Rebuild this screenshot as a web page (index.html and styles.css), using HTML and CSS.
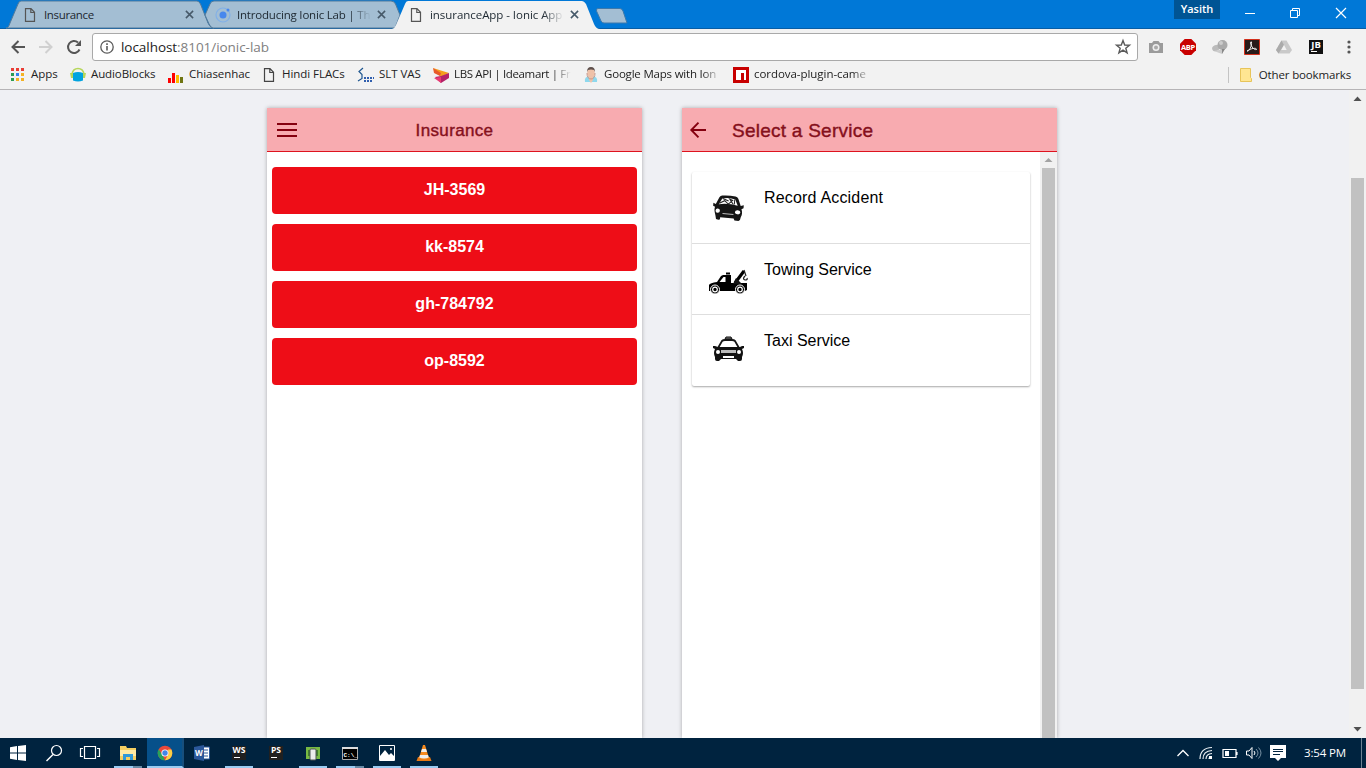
FILE: index.html
```html
<!DOCTYPE html>
<html lang="en">
<head>
<meta charset="utf-8">
<title>insuranceApp - Ionic App</title>
<link rel="stylesheet" href="styles.css">
</head>
<body>
<svg class="defs" aria-hidden="true">
  <symbol id="doc" viewBox="0 0 12 14"><path d="M1.500 .7h5.500l3.500 3.600v9H1.500zM6.800 .7v3.800h3.700" fill="none" stroke="currentColor" stroke-width="1.200"/></symbol>
  <symbol id="close" viewBox="0 0 10 10"><path d="M1 1l8 8M9 1L1 9" stroke="currentColor" stroke-width="1.700"/></symbol>
</svg>
<div class="screen">
  <header class="tabstrip">
    <div class="tab tab-a">
      <svg class="tab-shape" viewBox="0 0 208 28"><path d="M0 28C2 28 3 26 4 23L12 4Q13 1 15 1H191Q193 1 194.500 4L202 23Q204 28 208 28z" fill="#a3bed3" stroke="#527a9b"/></svg>
      <svg class="tab-doc"><use href="#doc"/></svg><span class="tab-title">Insurance</span><svg class="tab-close"><use href="#close"/></svg>
    </div>
    <div class="tab tab-b">
      <svg class="tab-shape" viewBox="0 0 198 28"><path d="M0 15L5 4Q6 1 9 1H186Q189 1 190.500 4L195 15L190 28H8Q6 28 4 24z" fill="#a3bed3" stroke="#527a9b"/></svg>
      <svg class="ionic" viewBox="0 0 16 16"><circle cx="8" cy="8" r="7" fill="none" stroke="#82b0e7" stroke-width="1.200"/><circle cx="8" cy="8" r="3.500" fill="#4787ed"/><circle cx="13" cy="3" r="1.500" fill="#4787ed"/></svg><span class="tab-title fade">Introducing Ionic Lab | Th</span><svg class="tab-close"><use href="#close"/></svg>
    </div>
    <div class="tab tab-c">
      <svg class="tab-shape" viewBox="0 0 208 29"><path d="M0 29Q3 28 4 25L13 4Q14 1 16 1H190Q192 1 194 4L202 24Q204 29 208 29z" fill="#f2f2f2"/></svg>
      <svg class="tab-doc"><use href="#doc"/></svg><span class="tab-title fade">insuranceApp - Ionic App</span><svg class="tab-close"><use href="#close"/></svg>
    </div>
    <svg class="newtab" viewBox="0 0 34 16"><path d="M3 .5H25Q27 .5 28 3L32 15H9Q7 15 6 13L1.500 3Q1 .5 3 .5z" fill="#a3bed3" stroke="#3c79ac"/></svg>
    <span class="profile">Yasith</span>
    <svg class="winctl" viewBox="0 0 104 12" fill="none" stroke="#fff"><path d="M1 6.500h10M46.500 3.500h7v7h-7zM48.500 3V1.500h7v7H54"/><path d="M92 1l10 10M102 1L92 11" stroke-width="1.200"/></svg>
  </header>

  <div class="toolbar">
    <svg class="nav" viewBox="0 0 74 16" fill="none" stroke-width="2"><path d="M15 8H2.500M8.500 2l-6 6 6 6" stroke="#555"/><path d="M29 8h12M35.500 2l6 6-6 6" stroke="#d0d0d0"/><path d="M69.500 10.500A6 6 0 1 1 68 3.500" stroke="#555"/><path d="M71 1v6h-6z" fill="#555"/></svg>
    <div class="omnibox">
      <svg class="info" viewBox="0 0 14 14"><circle cx="7" cy="7" r="6.200" fill="none" stroke="#5a5a5a" stroke-width="1.300"/><path d="M7 6v4.500M7 3.300v1.600" stroke="#5a5a5a" stroke-width="1.600"/></svg>
      <span class="url">localhost<span class="path">:8101/ionic-lab</span></span>
      <svg class="star" viewBox="0 0 16 16"><path d="M8 1.500l1.700 4.500 4.800.2-3.700 3 1.300 4.700L8 11.200l-4.100 2.700 1.300-4.700-3.700-3 4.800-.2z" fill="none" stroke="#5a5a5a" stroke-width="1.400"/></svg>
    </div>
    <div class="exts">
      <svg viewBox="0 0 16 16"><path d="M1 4h3l1.500-2h5L12 4h3v10H1z" fill="#9b9b9b"/><circle cx="8" cy="8.500" r="3.500" fill="#eee"/><circle cx="8" cy="8.500" r="2" fill="#aaa"/></svg>
      <svg viewBox="0 0 16 16"><path d="M4.700 0h6.600L16 4.700v6.600L11.300 16H4.700L0 11.300V4.700z" fill="#c90000"/><text x="8" y="10.800" class="abp">ABP</text></svg>
      <svg viewBox="0 0 16 16"><ellipse cx="4" cy="9" rx="4" ry="3" fill="#bbb" transform="rotate(-25 4 9)"/><path d="M2 12l8 3 2-5z" fill="#ccc"/><circle cx="10.500" cy="6" r="5" fill="#aaa"/><circle cx="9" cy="4" r="2" fill="#ccc"/><path d="M10 10h3l-3 5z" fill="#888"/></svg>
      <svg viewBox="0 0 16 16"><path d="M.5.500h15v15H.5z" fill="#281b1a" stroke="#d2301c"/><path d="M3 12c2 1 5-5 4.500-9-1-1-1.500 1 0 4s4 4 5 3.500c.5-2-5-1.500-9.500 1.500z" fill="none" stroke="#eee"/></svg>
      <svg viewBox="0 0 16 16"><path d="M5.500 1.500h5l5.500 9.500-2.500 3.500h-11L0 11z" fill="#c9c9c9"/><path d="M5.500 1.500L8 6l-5.500 8.500L0 11z" fill="#ababab"/><path d="M8 6l2.700 5H5.200z" fill="#f2f2f2"/></svg>
      <svg viewBox="0 0 16 16"><path d="M1 1h14v14H1z" fill="#111"/><text x="8" y="9" class="jb">JB</text><path d="M3 12.500h6" stroke="#fff" stroke-width="1"/></svg>
    </div>
    <svg class="menu" viewBox="0 0 4 14" fill="#555"><circle cx="2" cy="2" r="1.600"/><circle cx="2" cy="7" r="1.600"/><circle cx="2" cy="12" r="1.600"/></svg>
  </div>

  <nav class="bookmarks">
    <span class="bm w-apps"><svg viewBox="0 0 16 16"><path d="M1 1h3v3H1zM6 1h3v3H6zM11 1h3v3h-3z" fill="#e93d35"/><path d="M1 6h3v3H1zM1 11h3v3H1z" fill="#2c9d54"/><path d="M6 6h3v3H6z" fill="#3583ed"/><path d="M11 6h3v3h-3zM6 11h3v3H6zM11 11h3v3h-3z" fill="#f4b223"/></svg><b>Apps</b></span>
    <span class="bm w-audio"><svg viewBox="0 0 16 16"><path d="M2 7Q3 1.500 8 1.500T14 7" fill="none" stroke="#b6d65a" stroke-width="1.600"/><path d="M0 6h3v5H1zM13 6h3l-1 5h-2z" fill="#b6d65a"/><path d="M3 6q5-2 10 0v7.500q-5 2-10 0z" fill="#00a3df"/></svg><b>AudioBlocks</b></span>
    <span class="bm w-chia"><svg viewBox="0 0 16 16"><path d="M0 11h3v5H0zM4 6h3v10H4z" fill="#f00"/><path d="M8 8h3v8H8z" fill="#fdbc00"/><path d="M12 10h3v6h-3z" fill="#6f7512"/></svg><b>Chiasenhac</b></span>
    <span class="bm w-hindi"><svg class="bdoc"><use href="#doc"/></svg><b>Hindi FLACs</b></span>
    <span class="bm w-slt"><svg viewBox="0 0 16 16"><path d="M5 1L1 4.500l3 3v4L0 14" fill="none" stroke="#1e568f" stroke-width="1.200"/><path d="M6 11h10M6 14h9" stroke="#315fae" stroke-width="2" stroke-dasharray="2 1"/></svg><b>SLT VAS</b></span>
    <span class="bm w-lbs"><svg viewBox="0 0 16 16"><path d="M0 1l16 5-8 4z" fill="#f59d1b"/><path d="M0 1l8 5-1 3-6-3z" fill="#e85a2a"/><path d="M2 10l6-1 8-3v5l-8 5z" fill="#b52268"/><path d="M1 11l7-1v6z" fill="#e83b74"/></svg><b class="fade">LBS API | Ideamart | Fr</b></span>
    <span class="bm w-map"><svg viewBox="0 0 16 16"><path d="M2 15q-1-5 4-6h4q5 1 4 6z" fill="#8ed8ed"/><path d="M6 9h4v4l-2 3-2-3z" fill="#efc1a8"/><ellipse cx="8" cy="6" rx="3.800" ry="5" fill="#efc1a8"/><path d="M4 5Q4 0 8 0t4 5l-1-2q-3-1-6 0z" fill="#5f504c"/><path d="M4 6q0 6 4 6t4-6" fill="none" stroke="#c7978a"/></svg><b class="fade">Google Maps with Ion</b></span>
    <span class="bm w-npm"><svg viewBox="0 0 16 16"><path d="M0 0h16v16H0z" fill="#c80000"/><path d="M3 3h10v10h-2V6H8v7H3z" fill="#fff"/></svg><b class="fade">cordova-plugin-came</b></span>
    <span class="bm other"><svg viewBox="0 0 16 16"><path d="M2.500 1.500h10v9l1 1v3h-11z" fill="#ffe692" stroke="#e7c45a"/></svg><b>Other bookmarks</b></span>
  </nav>

  <main class="page">
    <section class="phone">
      <div class="bar bar-ios"><svg class="burger" viewBox="0 0 20 14"><path d="M0 1h20M0 7h20M0 13h20" stroke="#85000f" stroke-width="2"/></svg><h1>Insurance</h1></div>
      <div class="list"><button>JH-3569</button><button>kk-8574</button><button>gh-784792</button><button>op-8592</button></div>
    </section>
    <section class="phone">
      <div class="bar bar-md"><svg class="back" viewBox="0 0 16 16"><path d="M16 8H1.500M8.500 .7L1.300 8l7.200 7.300" fill="none" stroke="#85000f" stroke-width="1.900"/></svg><h1>Select a Service</h1></div>
      <div class="content">
        <div class="card">
          <div class="row"><svg viewBox="0 0 60 60"><g transform="rotate(5 28 23)"><path d="M15.500 20l3-7q1-2 3-2 7-1 13 0 2 0 3 2l3 7 3-1v3l-2 1q2 4 0 8 0 3-2 4h-4l-1-2H21v2q-1 1-4 0l-1-4q-2-5-1-8l-2-1v-3z" fill="#151515"/><path d="M18.500 20l3-6q7-2 13 0l3 6q-9-2-19 0z" fill="#fff"/><path d="M19 19l5-3 4 3 4-4-3-1 4 5M22 14l6 2M34 14v5" stroke="#222" fill="none"/><circle cx="18" cy="26.500" r="2.200" fill="#fff"/><ellipse cx="38" cy="26.500" rx="2.700" ry="2" fill="#fff"/><path d="M23 29h11" stroke="#bbb"/></g></svg><h2>Record Accident</h2></div>
          <div class="row"><svg viewBox="0 0 60 60"><path d="M9 34v-6q1-2 8-3l4-6 2-1h8v8h16v7l-2 1z" fill="#000"/><path d="M19.500 25l4-5h2v5z" fill="#fff"/><path d="M26 16.500h4" stroke="#000" stroke-width="2"/><path d="M35 26L44 14" fill="none" stroke="#000" stroke-width="3.200"/><path d="M44 13l2 6M45 19q-3 3 0 4 3 0 2-2" fill="none" stroke="#222" stroke-width="1.200"/><path d="M33 27l3-6 6 6z" fill="#111"/><g fill="#000" stroke="#fff"><circle cx="15" cy="32.500" r="4.500"/><circle cx="40" cy="32.500" r="4.500"/></g><g fill="#000" stroke="#fff" stroke-width="1.200"><circle cx="15" cy="32.500" r="2.300"/><circle cx="40" cy="32.500" r="2.300"/></g></svg><h2>Towing Service</h2></div>
          <div class="row"><svg viewBox="0 0 60 60"><path d="M25 11l1-2h5l1 2z" fill="#777" stroke="#111"/><path d="M18 20l4-7q1-1 3-1h7q2 0 3 1l4 7" fill="#fff" stroke="#161616" stroke-width="1.800"/><path d="M18 19h22l2-1h2v2l-2 1q2 4 0 8v2q0 2-2 2h-2l-2-2H21l-2 2h-2q-2 0-2-2v-2q-2-4 0-8l-2-1v-2h2z" fill="#111"/><circle cx="18" cy="24" r="2" fill="#fff"/><circle cx="39" cy="24" r="2" fill="#fff"/><path d="M21 22h15v3H21z" fill="#bbb"/><path d="M23 28h11v2H23z" fill="#fff"/></svg><h2>Taxi Service</h2></div>
        </div>
        <div class="inner-scroll"><svg viewBox="0 0 17 16"><path d="M4.500 10h8L8.500 6z" fill="#a3a3a3"/></svg><i></i></div>
      </div>
    </section>
    <div class="page-scroll"><svg viewBox="0 0 17 17"><path d="M4.500 11h8L8.500 6.500z" fill="#505050"/></svg><i></i><svg viewBox="0 0 17 17"><path d="M4.500 6h8l-4 4.500z" fill="#505050"/></svg></div>
  </main>

  <footer class="taskbar">
    <div class="task sys"><svg viewBox="0 0 16 16"><path d="M0 2.200L7 1v6.500H0zM8 1l8-1v7.500H8zM0 8.500h7V15l-7-1.200zM8 8.500h8V16l-8-1z" fill="#fff"/></svg></div>
    <div class="task sys"><svg viewBox="0 0 16 16"><circle cx="9.500" cy="5.500" r="5" fill="none" stroke="#fff" stroke-width="1.200"/><path d="M6 9.500L-.5 16" stroke="#fff" stroke-width="1.400"/></svg></div>
    <div class="task sys"><svg class="wide" viewBox="0 0 20 16"><path d="M3.500 1.500h11v12h-11zM2 3.500H-.5v8H2M16 3.500h2.500v8H16" fill="none" stroke="#fff" stroke-width="1.200"/></svg></div>
    <div class="task open more"><svg viewBox="0 0 16 16"><path d="M0 1h6l1 2h9v12H0z" fill="#f5cf62"/><path d="M0 5h16v6H0z" fill="#ffeaa4"/><path d="M3 9h10v6h-3v-3H6v3H3z" fill="#3099d9"/></svg></div>
    <div class="task chrome"><svg viewBox="0 0 16 16"><circle cx="8" cy="8" r="7.300" fill="#e8483b"/><path d="M1.700 4.300L6 11l2 4.300A7.300 7.300 0 0 1 1.700 4.300z" fill="#27a35a"/><path d="M8 15.300L11.500 9l-.5-4.500h3.400A7.300 7.300 0 0 1 8 15.300z" fill="#fbd044"/><circle cx="8" cy="8" r="3.600" fill="#fff"/><circle cx="8" cy="8" r="2.700" fill="#4285e8"/></svg></div>
    <div class="task"><svg viewBox="0 0 16 16"><path d="M9 2h6.500v12H9z" fill="#fff" stroke="#2b579a"/><path d="M10 5h4M10 8h4M10 11h4" stroke="#2b579a"/><path d="M0 2l10-2v16L0 14z" fill="#2b579a"/><text x="4.800" y="11" class="word">W</text></svg></div>
    <div class="task open"><svg viewBox="0 0 16 16"><path d="M1 1h14v14H1z" fill="#202020"/><text x="8" y="8" class="ide">WS</text><path d="M3 12.500h6" stroke="#fff"/></svg></div>
    <div class="task"><svg viewBox="0 0 16 16"><path d="M1 1h14v14H1z" fill="#202020"/><text x="8" y="8" class="ide">PS</text><path d="M3 12.500h6" stroke="#fff"/></svg></div>
    <div class="task open"><svg viewBox="0 0 16 16"><path d="M1 2h14v12H1z" fill="#78b943"/><path d="M3 5h10v6H3z" fill="#417d2f"/><rect x="5" y="4" width="6" height="11" rx="1" fill="#ececec" stroke="#4d5553"/></svg></div>
    <div class="task open more"><svg viewBox="0 0 16 16"><path d="M.5 2.500h15v12H.5z" fill="#000" stroke="#aaa"/><path d="M0 2h16v2H0z" fill="#ddd"/><text x="1.500" y="11.500" class="cmd">C:\_</text></svg></div>
    <div class="task open"><svg viewBox="0 0 16 16"><path d="M.5.500h15v15H.5z" fill="#00233f" stroke="#fff"/><path d="M1 11l5-6 4 5 2-2 3 3v4H1z" fill="#fff"/><circle cx="12" cy="4" r="1" fill="#fff"/></svg></div>
    <div class="task open"><svg viewBox="0 0 16 16"><path d="M2 12h12l1.500 4H.5z" fill="#e67814"/><path d="M7 0h2l4 13q-5 3-10 0z" fill="#f58a1e"/><path d="M6 4h4l1 3H5zM4 10h8l.8 2.500q-4.800 2-9.600 0z" fill="#eee"/></svg></div>
    <div class="tray">
      <svg viewBox="0 0 14 16"><path d="M1.500 11L7 5.500l5.500 5.500" fill="none" stroke="#fff" stroke-width="1.300"/></svg>
      <svg viewBox="0 0 14 16"><path d="M1 14Q1 3 13 2.500M4 14Q4 6 13 5.500M7 14q0-5 6-5.500M10 14q0-2 3-2.500" fill="none" stroke="#e7edf2" stroke-width="1.200"/><path d="M10 11h3v3h-3z" fill="#fff"/></svg>
      <svg class="t16" viewBox="0 0 16 16"><path d="M1 4.500h13v8H1zM15 7v3" fill="none" stroke="#fff" stroke-width="1.200"/><path d="M3 6h4v5H3z" fill="#fff"/></svg>
      <svg class="t16" viewBox="0 0 16 16"><path d="M.5 6h2.500L6 2.500v11L3 10H.5z" fill="none" stroke="#fff"/><path d="M8 6q2 2 0 4" fill="none" stroke="#fff"/><path d="M10 4q4 4 0 8M12.500 2.500q5 5.500 0 11" fill="none" stroke="#7890a2"/></svg>
      <svg class="t16" viewBox="0 0 16 16"><path d="M0 0h16v13h-5l-3 3-3-3H0z" fill="#fff"/><path d="M3 4.500h10M3 6.500h10M3 9.500h7" stroke="#00233f"/></svg>
      <span class="clock">3:54 PM</span>
    </div>
  </footer>
</div>
</body>
</html>
```
FILE: styles.css
```css
* { box-sizing: border-box; }
body { margin: 0; font: 12px "Open Sans", "Noto Sans", sans-serif; color: #222; }
svg { display: block; flex: none; overflow: visible; }
h1, h2 { margin: 0; }
.defs { position: absolute; width: 0; height: 0; }
.screen { width: 1366px; height: 768px; overflow: hidden; display: flex; flex-direction: column; background: #eff0f4; }

.tabstrip { height: 29px; flex: none; display: flex; align-items: flex-start; background: #0078d7; border-bottom: 1px solid #075da5; padding-left: 6px; }
.tab { position: relative; height: 29px; display: flex; align-items: center; flex: none; z-index: 1; }
.tab-shape { position: absolute; left: 0; top: 0; width: 100%; height: 28px; z-index: -1; }
.tab-a { width: 208px; padding-left: 18px; }
.tab-b { width: 198px; margin-left: -9px; padding-left: 10px; }
.tab-c { width: 208px; margin-left: -11px; padding-left: 18px; z-index: 2; }
.tab-c .tab-shape { height: 29px; }
.tab-doc { width: 12px; height: 14px; color: #555; margin: 0 8px 0 0; }
.tab-title { font-size: 11.500px; line-height: 29px; width: 134px; white-space: nowrap; letter-spacing: -.2px; color: #1c2730; }
.tab-a .tab-title { margin-right: 7px; letter-spacing: -.35px; }
.ionic { width: 16px; height: 16px; margin-right: 6px; }
.tab-b .tab-title { margin-right: 6px; }
.tab-c .tab-title { margin-right: 6px; letter-spacing: -.05px; }
.fade { -webkit-mask-image: linear-gradient(90deg, #000 84%, transparent); mask-image: linear-gradient(90deg, #000 84%, transparent); }
.tab-close { width: 9px; height: 9px; color: #465969; }
.newtab { width: 34px; height: 16px; margin: 8px 0 0 -5px; }
.profile { width: 46px; height: 19px; margin-left: auto; background: #005494; color: #fff; font: 600 11px/18px "Open Sans", sans-serif; text-align: center; }
.winctl { width: 104px; height: 12px; margin: 7px 18px 0 24px; }

.toolbar { height: 34px; flex: none; display: flex; align-items: center; background: #f2f2f2; padding: 2px 15px 0 10px; }
.nav { width: 74px; height: 16px; }
.omnibox { width: 1046px; height: 28px; margin-left: 8px; background: #fff; border: 1px solid #a9a9a9; border-radius: 3px; display: flex; align-items: center; padding: 0 6px 0 7px; }
.info { width: 14px; height: 14px; }
.url { font-size: 13.500px; letter-spacing: -.05px; margin-left: 7px; }
.path { color: #808080; }
.star { width: 16px; height: 16px; margin-left: auto; }
.exts { display: flex; gap: 16px; margin-left: 10px; }
.exts svg { width: 16px; height: 16px; }
.menu { width: 4px; height: 14px; margin-left: auto; }
.abp, .jb, .word, .ide { font-family: "Open Sans", sans-serif; font-weight: 700; fill: #fff; text-anchor: middle; }
.abp { font-size: 7.500px; letter-spacing: -.3px; } .jb { font-size: 9.500px; } .word { font-size: 8px; } .ide { font-size: 8.500px; }
.cmd { font: 700 6px "Liberation Mono", monospace; fill: #fff; }

.bookmarks { height: 27px; flex: none; display: flex; background: #f2f2f2; border-bottom: 1px solid #b6b4b6; padding: 0 15px 3px 10px; }
.bm { display: flex; align-items: center; flex: none; }
.bm svg { width: 16px; height: 16px; margin-right: 5px; }
.bm b { font-weight: 400; white-space: nowrap; font-size: 11.500px; line-height: 20px; padding-bottom: 1px; letter-spacing: -.05px; }
.bm .bdoc { width: 12px; height: 14px; margin-right: 7px; color: #444; }
.w-apps { width: 60px; } .w-audio { width: 98px; } .w-chia { width: 95px; } .w-hindi { width: 95px; }
.w-slt { width: 75px; } .w-lbs { width: 150px; } .w-map { width: 150px; } .w-npm { width: 150px; }
.w-lbs b, .w-map b, .w-npm b { width: 117px; }
.w-lbs b { letter-spacing: -.35px; }
.w-map b { letter-spacing: -.2px; }
.w-audio b { letter-spacing: -.1px; }
.bm.other { margin: 4px 0 0 auto; height: 16px; border-left: 1px solid #c4c4c4; padding-left: 9px; }
.other b { letter-spacing: -.15px; }

.page { flex: 1; min-height: 0; display: flex; gap: 40px; padding: 18px 0 0 267px; overflow: hidden; }
.phone { width: 375px; flex: none; background: #fff; box-shadow: 0 0 4px rgba(0,0,0,.3); font-family: "Liberation Sans", Arial, sans-serif; }
.bar { height: 44px; display: flex; align-items: center; background: #f8abb0; border-bottom: 1px solid #de131e; color: #85101c; }
.bar h1 { font-weight: 400; padding-top: 2px; -webkit-text-stroke: .4px #85101c; }
.bar-ios { padding-left: 10px; }
.burger { width: 20px; height: 14px; }
.bar-ios h1 { font-size: 17px; flex: 1; text-align: center; padding-right: 30px; letter-spacing: .35px; }
.bar-md { padding-left: 8px; }
.back { width: 16px; height: 16px; }
.bar-md h1 { font-size: 19px; margin-left: 26px; letter-spacing: .25px; }
.list { display: flex; flex-direction: column; gap: 10px; padding: 15px 5px; }
.list button { height: 47px; border: 0; border-radius: 4px; background: #ee0d17; color: #fff; font: 700 16px/45px "Liberation Sans", Arial, sans-serif; padding: 0 0 2px; letter-spacing: 0; }
.content { height: 586px; display: flex; justify-content: space-between; padding-left: 10px; }
.card { width: 338px; height: 214px; margin-top: 20px; border-radius: 2px; box-shadow: 0 1px 2px rgba(0,0,0,.35); background: #fff; }
.row { height: 71.500px; display: flex; padding-left: 8px; border-bottom: 1px solid #dedede; }
.row:last-child { border: 0; }
.row svg { width: 60px; height: 60px; margin-top: 13px; }
.row h2 { font-size: 16px; font-weight: 400; color: #000; margin: 17px 0 0 4px; }
.row:first-child h2 { letter-spacing: .18px; }
.inner-scroll { width: 17px; background: #f1f1f1; display: flex; flex-direction: column; }
.inner-scroll svg { width: 17px; height: 16px; }
.inner-scroll i { flex: 1; margin: 0 2px; background: #c1c1c1; }
.page-scroll { width: 17px; margin: -18px 0 0 auto; background: #f1f1f1; display: flex; flex-direction: column; }
.page-scroll svg { width: 17px; height: 17px; }
.page-scroll i { height: 511px; margin: 71px 2px auto; background: #c1c1c1; }

.taskbar { height: 30px; flex: none; display: flex; background: #00233f; color: #fff; }
.task { width: 37px; display: flex; justify-content: center; align-items: center; position: relative; }
.sys { width: 36.500px; }
.task svg { width: 16px; height: 16px; }
.task .wide { width: 20px; }
.open::after { content: ""; position: absolute; left: 4.500px; bottom: 0; width: 28px; height: 2px; background: #99cbf2; }
.more::after { background: linear-gradient(90deg, #99cbf2 19px, #6689a5 19px); }
.chrome { background: #06508a; border-bottom: 2px solid #99cbf2; border-right: 2px solid #174f7d; padding: 2px 0 0 2px; }
.tray { margin-left: auto; display: flex; align-items: center; width: 190px; gap: 9px; border-right: 1px solid #6c8293; margin-right: 4px; padding-left: 4px; }
.tray svg { width: 14px; height: 16px; }
.tray .t16 { width: 16px; }
.tray .t16 + .t16 { margin-left: -1px; }
.clock { font-size: 11.500px; letter-spacing: -.15px; margin-left: 9px; white-space: nowrap; padding-bottom: 2px; }
```
